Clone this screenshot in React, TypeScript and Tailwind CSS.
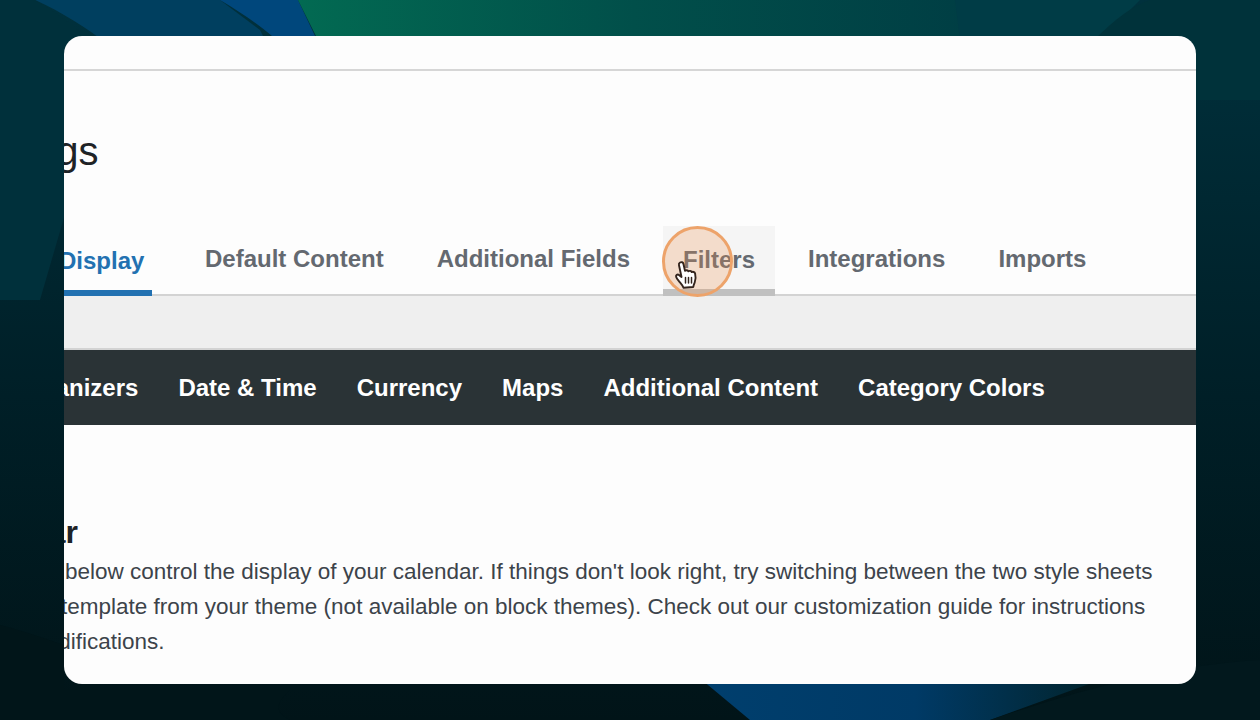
import React from "react";

const tabs = ["Default Content", "Additional Fields"];
const navItems = ["Date & Time", "Currency", "Maps", "Additional Content", "Category Colors"];

// wallpaper behind the card
const Wallpaper = () => (
  <svg className="absolute inset-0" width="1260" height="720" viewBox="0 0 1260 720">
    <defs>
      <linearGradient id="base" x1="0" y1="0" x2="0" y2="1">
        <stop offset="0" stopColor="#00313d" />
        <stop offset="0.55" stopColor="#001f27" />
        <stop offset="1" stopColor="#011418" />
      </linearGradient>
      <linearGradient id="green" x1="0" y1="0" x2="1" y2="0">
        <stop offset="0" stopColor="#026a52" />
        <stop offset="0.5" stopColor="#014f4a" />
        <stop offset="1" stopColor="#003e44" />
      </linearGradient>
      <linearGradient id="blue" x1="0" y1="0" x2="1" y2="0">
        <stop offset="0" stopColor="#003f6e" />
        <stop offset="0.55" stopColor="#003a66" />
        <stop offset="1" stopColor="#02242c" />
      </linearGradient>
    </defs>
    <rect width="1260" height="720" fill="url(#base)" />
    <path d="M35 0 C90 25 130 60 180 110 L300 110 L260 30 L220 0 Z" fill="#003f5f" />
    <path d="M220 0 C240 12 258 24 272 36 L315 36 L298 0 Z" fill="#00477c" />
    <path d="M298 0 L318 40 L960 40 L970 0 Z" fill="url(#green)" />
    <path d="M955 0 L960 40 L1100 40 L1140 0 Z" fill="#003c46" />
    <path d="M1098 36 C1120 15 1135 5 1150 0 L1260 0 L1260 100 L1190 100 Z" fill="#00323a" />
    <path d="M0 0 L35 0 C70 20 90 40 110 60 L40 300 L0 300 Z" fill="#00303b" />
    <path d="M690 670 L750 720 L990 720 L1100 680 L1100 660 L700 660 Z" fill="url(#blue)" />
    <path d="M990 720 C1080 690 1170 665 1260 660 L1260 720 Z" fill="#02181d" />
    <path d="M0 625 C20 630 50 640 64 645 L64 690 L290 690 C280 700 270 710 290 720 L0 720 Z" fill="#011519" />
  </svg>
);

const HandCursor = () => (
  <svg className="absolute left-[674px] top-[260px]" width="26" height="32" viewBox="0 0 26 32">
    <path
      d="M6 2.5c1.4-.9 3-.2 3.4 1.3l1.6 7c.8-.8 2.8-.9 3.4.5.9-.7 2.8-.6 3.3.8 1-.6 3-.2 3.4 1.4.6 2.4.6 6.5-.4 9-.6 1.6-1.2 2.8-1.4 4.5l-9.8.8c-.7-2.2-2.6-4.2-4.4-6.4-1-1.2-2.7-3.3-3-4.6-.4-1.6 1.3-2.9 2.8-1.9l2.6 2.1L5 5.200c-.3-1.100 0-2.100 1-2.700z"
      fill="#fff"
      stroke="#33241d"
      strokeWidth="1.900"
      strokeLinejoin="round"
    />
    <path d="M11.500 17.500v5.500M14.500 17.500v5.500M17.500 17.500v5.500" stroke="#33241d" strokeWidth="1.500" strokeLinecap="round" />
  </svg>
);

export default function App() {
  return (
    <div className="relative w-[1260px] h-[720px] overflow-hidden bg-[#001f27] pl-[64px] pt-[36px] font-['Liberation_Sans',Arial,sans-serif]">
      <Wallpaper />
      <div className="relative w-[1132px] h-[648px] rounded-[18px] overflow-hidden bg-[#fdfdfd]">
        <div className="h-[33px]" />
        <div className="h-[2px] bg-[#d6d6d6]" />

        {/* page title */}
        <h1 className="h-[156px] pt-[56px] -ml-[110px] text-[40px] leading-[48px] font-normal text-[#1f2326] whitespace-nowrap">
          Settings
        </h1>

        {/* tabs */}
        <div className="flex h-[70px] items-stretch -mt-[1px] border-b-2 border-[#d3d3d3] text-[24px] font-bold text-[#646970] whitespace-nowrap">
          <div className="flex items-center h-[70px] -ml-[25px] w-[113px] pl-[20px] border-b-[6px] border-[#2271b1] text-[#2271b1] pt-[6px]">
            Display
          </div>
          {tabs.map((t) => (
            <div key={t} className="flex items-center ml-[33px] pl-[20px] pb-[2px]">
              {t}
            </div>
          ))}
          <div className="flex items-center h-[70px] ml-[33px] px-[20px] bg-[#f5f5f5] border-b-[7px] border-[#c0c0c0] pt-[5px]">
            Filters
          </div>
          <div className="flex items-center ml-[33px] pb-[2px]">Integrations</div>
          <div className="flex items-center ml-[53px] pb-[2px]">Imports</div>
        </div>

        {/* grey band */}
        <div className="h-[54px] bg-[#efefef] border-b-2 border-[#d3d3d3]" />

        {/* sub nav */}
        <div className="flex items-center gap-[40px] h-[75px] bg-[#2a3336] text-white text-[24px] font-bold whitespace-nowrap -ml-[51px]">
          <span>Organizers</span>
          {navItems.map((n) => (
            <span key={n}>{n}</span>
          ))}
        </div>

        {/* content */}
        <div className="pt-[89px] whitespace-nowrap">
          <h2 className="-ml-[123px] text-[32px] leading-[36px] font-bold text-[#1d2327]">Calendar</h2>
          <div className="mt-[4px] text-[22.500px] leading-[35px] text-[#3c434a]">
            <p className="ml-[1px]">
              below control the display of your calendar. If things don't look right, try switching between the two style sheets
            </p>
            <p className="-ml-[3px]">
              template from your theme (not available on block themes). Check out our customization guide for instructions
            </p>
            <p className="-ml-[37px]">modifications.</p>
          </div>
        </div>
      </div>

      {/* click highlight and cursor */}
      <div className="absolute left-[662px] top-[226px] w-[71px] h-[71px] rounded-full border-[3px] border-[#eda36a] bg-[#f0954f]/25" />
      <HandCursor />
    </div>
  );
}
